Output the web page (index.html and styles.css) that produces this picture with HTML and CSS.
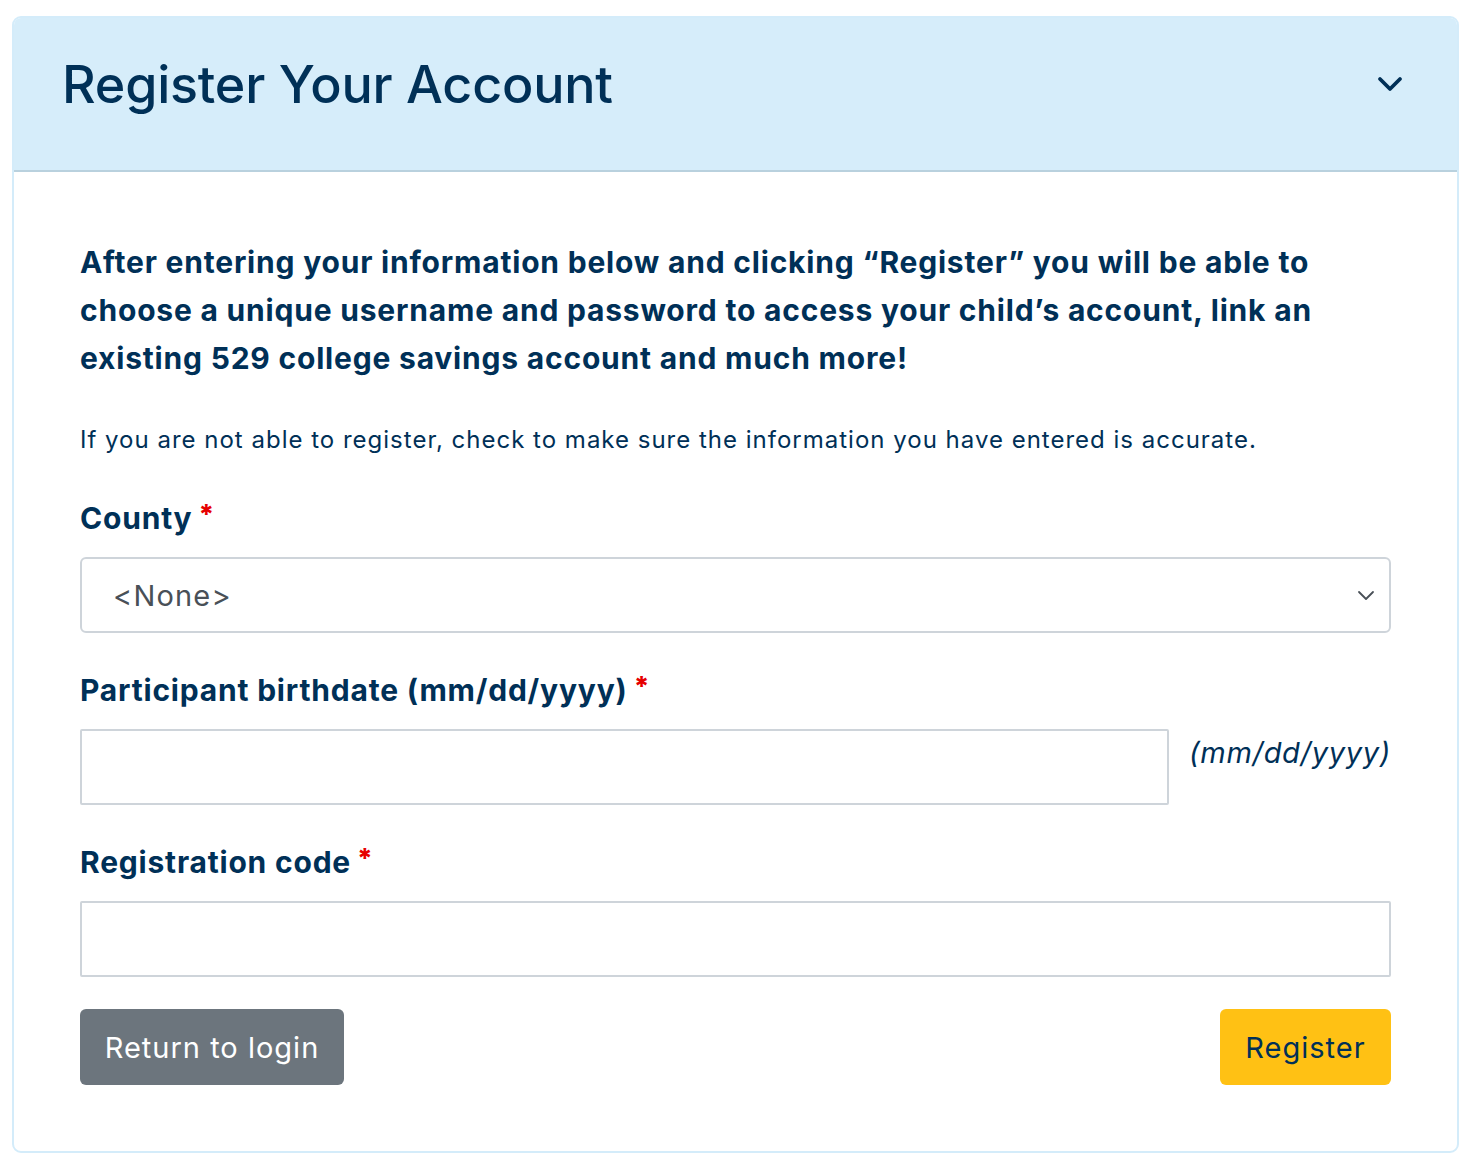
FILE: index.html
```html
<!DOCTYPE html>
<html lang="en">
<head>
<meta charset="utf-8">
<title>Register Your Account</title>
<link rel="stylesheet" href="styles.css">
</head>
<body>
<div class="card">
  <div class="card-header">
    <h1 class="title">Register Your Account</h1>
    <svg class="chevron" width="26" height="18" viewBox="0 0 26 18" aria-hidden="true"><path d="M3 4 L13 14 L23 4" fill="none" stroke="#003057" stroke-width="3.8" stroke-linecap="round" stroke-linejoin="round"/></svg>
  </div>
  <div class="card-body">
    <p class="lead">After entering your information below and clicking “Register” you will be able to choose a unique username and password to access your child’s account, link an existing 529 college savings account and much more!</p>
    <p class="note">If you are not able to register, check to make sure the information you have entered is accurate.</p>
    <div class="field">
      <label class="label">County<span class="req">*</span></label>
      <div class="select">
        <span class="select-value">&lt;None&gt;</span>
        <svg class="select-caret" width="18" height="12" viewBox="0 0 18 12" aria-hidden="true"><path d="M2 3 L9 10 L16 3" fill="none" stroke="#495057" stroke-width="1.8" stroke-linecap="round" stroke-linejoin="round"/></svg>
      </div>
    </div>
    <div class="field">
      <label class="label">Participant birthdate (mm/dd/yyyy)<span class="req">*</span></label>
      <div class="input-row">
        <div class="input input-date"></div>
        <span class="hint">(mm/dd/yyyy)</span>
      </div>
    </div>
    <div class="field">
      <label class="label">Registration code<span class="req">*</span></label>
      <div class="input"></div>
    </div>
    <div class="actions">
      <button class="btn btn-gray">Return to login</button>
      <button class="btn btn-yellow">Register</button>
    </div>
  </div>
</div>
</body>
</html>
```
FILE: styles.css
```css
* { box-sizing: border-box; }
html, body { margin: 0; padding: 0; background: #fff; }
body {
  font-family: Inter, "Noto Sans", sans-serif;
  color: #003057;
  padding: 16px 11px 0 12px;
}
.card {
  border: 2px solid #d4ecfa;
  border-radius: 9px;
  overflow: hidden;
  height: 1137px;
}
.card-header {
  background: #d6edfa;
  height: 154px;
  border-bottom: 2px solid #b9d1de;
  display: flex;
  align-items: center;
  justify-content: space-between;
  padding: 0 54px 0 48px;
}
.title {
  margin: 0;
  font-size: 52px;
  font-weight: 500;
  letter-spacing: -0.2px;
  position: relative;
  top: -10px;
}
.chevron { position: relative; top: -10px; }
.card-body {
  padding: 66px 66px 0 66px;
}
.lead {
  margin: 0 -20px 0 0;
  font-size: 30px;
  font-weight: 700;
  line-height: 48px;
  letter-spacing: 0.8px;
}
.note {
  margin: 40px 0 0;
  font-size: 24px;
  line-height: 36px;
  letter-spacing: 1px;
}
.field { margin-top: 42px; }
.field + .field { margin-top: 39px; }
.label {
  display: block;
  font-size: 30px;
  font-weight: 700;
  line-height: 36px;
  margin-bottom: 21px;
  letter-spacing: 0.8px;
}
.req {
  color: #e60000;
  font-size: 27px;
  font-weight: 800;
  line-height: 0;
  margin-left: 6px;
  vertical-align: 5px;
  letter-spacing: 0;
}
.select, .input {
  height: 76px;
  border: 2px solid #ced4da;
  background: #fff;
}
.select {
  border-radius: 6px;
  display: flex;
  align-items: center;
  justify-content: space-between;
  padding: 0 14px 0 31px;
}
.select-value {
  font-size: 29px;
  color: #495057;
  letter-spacing: 1.2px;
}
.input-row {
  display: flex;
  align-items: flex-start;
  gap: 20px;
}
.input { border-radius: 2px; }
.input-date { flex: 1; }
.hint {
  font-size: 29px;
  font-style: italic;
  line-height: 48px;
  letter-spacing: 0.7px;
  white-space: nowrap;
}
.actions {
  margin-top: 32px;
  display: flex;
  justify-content: space-between;
}
.btn {
  height: 76px;
  border: none;
  border-radius: 6px;
  font-family: Inter, "Noto Sans", sans-serif;
  font-size: 29px;
  letter-spacing: 1px;
  padding: 0;
}
.btn-gray { background: #6c757d; color: #fff; width: 264px; }
.btn-yellow { background: #ffc114; color: #003057; width: 171px; }
```
